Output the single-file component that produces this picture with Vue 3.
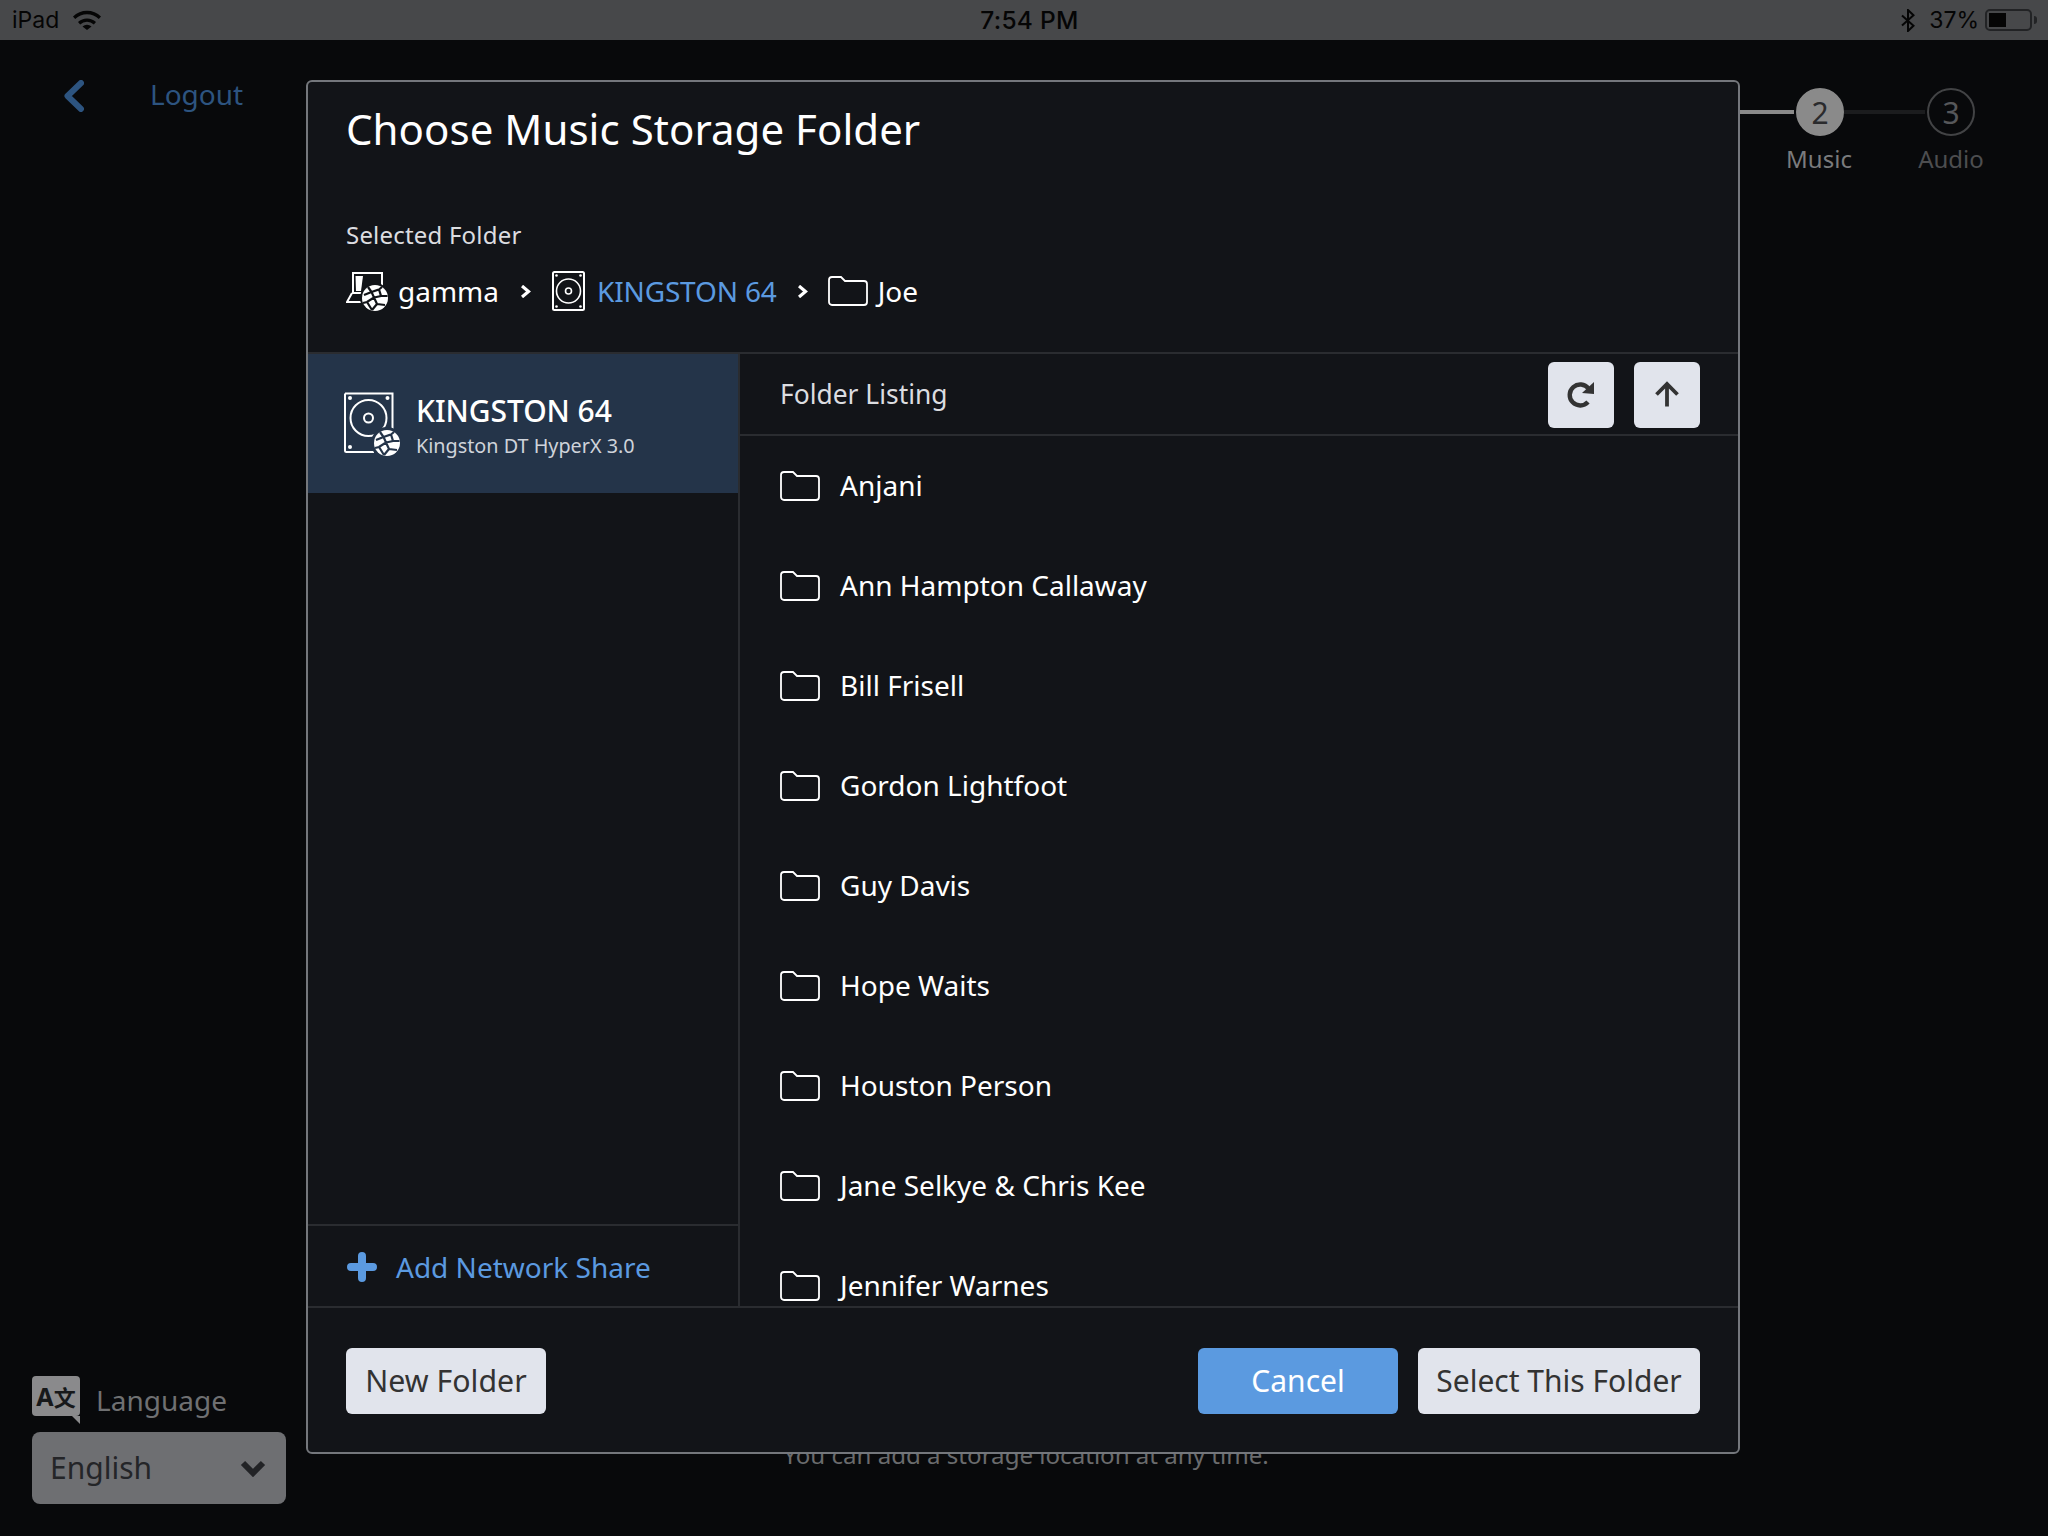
<script setup>
const folders = [
  'Anjani', 'Ann Hampton Callaway', 'Bill Frisell', 'Gordon Lightfoot', 'Guy Davis',
  'Hope Waits', 'Houston Person', 'Jane Selkye & Chris Kee', 'Jennifer Warnes'
]
const cracks = 'M-3.500-6-7-11M4-8.500 7-11M-3.500-6 4-8.500 6-2-1-0.500ZM-3.500-6-11-3M-1-0.500-8 4-12 5M-8 4-3 12M6-2 12.500-2M-1-0.500 2 6M2 6 10 7M2 6-3 12'
</script>

<template>
  <div class="page">
    <header class="status">
      <div class="status-left">
        <span>iPad</span>
        <svg class="wifi" viewBox="0 0 28 20">
          <path d="M9.500 16.400A7 7 0 0 1 18.500 16.400L14 20Z" />
          <path d="M5 12A13 13 0 0 1 23 12L20.800 14.400A10 10 0 0 0 7.200 14.400Z" />
          <path d="M0 6.500A20 20 0 0 1 28 6.500L25.800 9A17 17 0 0 0 2.200 9Z" />
        </svg>
      </div>
      <div class="status-time">7:54 PM</div>
      <div class="status-right">
        <svg class="bt" viewBox="0 0 14 23">
          <path d="M1 6.500 12.500 16.800 7 22V1l5.500 5.200L1 16.500" fill="none" stroke="#050505" stroke-width="2" />
        </svg>
        <span>37%</span>
        <div class="battery"><div class="battery-fill"></div></div>
        <div class="battery-nub"></div>
      </div>
    </header>

    <main class="main">
      <aside class="left">
        <div class="back-row">
          <svg class="back" viewBox="0 0 20 32">
            <path d="M17 3 3.500 16 17 29" fill="none" stroke="#2d5480" stroke-width="6" stroke-linecap="round" stroke-linejoin="round" />
          </svg>
          <span class="logout">Logout</span>
        </div>
        <div class="lang">
          <div class="lang-label">
            <div class="lang-icon"><b>A</b><b class="cjk">文</b></div>
            <span>Language</span>
          </div>
          <div class="lang-select">
            <span>English</span>
            <svg class="lang-chev" viewBox="0 0 26 17">
              <path d="M3 3 13 13 23 3" fill="none" stroke="#222326" stroke-width="6" />
            </svg>
          </div>
        </div>
      </aside>

      <section class="center">
        <p class="hint">You can add a storage location at any time.</p>
      </section>

      <aside class="steps">
        <div class="step-line done"></div>
        <div class="step">
          <div class="step-circle active">2</div>
          <div class="step-label music">Music</div>
        </div>
        <div class="step-line"></div>
        <div class="step">
          <div class="step-circle">3</div>
          <div class="step-label dim">Audio</div>
        </div>
      </aside>

      <div class="modal">
        <div class="modal-head">
          <h1 class="title">Choose Music Storage Folder</h1>
          <div class="selected-label">Selected Folder</div>
          <div class="crumbs">
            <svg class="ic-gamma" viewBox="0 0 42 40">
              <path d="M7 21V2h29v13" fill="none" stroke="#fff" stroke-width="2" />
              <path d="M9.500 5h7.500l-2 15H10Z" fill="#fff" />
              <path d="M6 22H20M6 22 1 31H18" fill="none" stroke="#fff" stroke-width="2" />
              <circle cx="29" cy="27" r="15" fill="#121418" />
              <circle cx="29" cy="27" r="13" fill="#fff" />
              <path :d="cracks" transform="translate(29 27)" fill="none" stroke="#121418" stroke-width="2.200" />
            </svg>
            <span class="crumb gamma">gamma</span>
            <svg class="crumb-sep" viewBox="0 0 10 13"><path d="M1 1 7.500 6.500 1 12" fill="none" stroke="#fff" stroke-width="3.200" /></svg>
            <svg class="ic-disk" viewBox="0 0 33 40">
              <rect x="1" y="1" width="31" height="38" rx="1.500" fill="none" stroke="#fff" stroke-width="2" />
              <circle cx="16.500" cy="20" r="12" fill="none" stroke="#fff" stroke-width="1.600" />
              <circle cx="16.500" cy="20" r="3" fill="none" stroke="#fff" stroke-width="1.600" />
              <circle cx="4.500" cy="4.500" r="1.300" fill="#fff" /><circle cx="28.500" cy="4.500" r="1.300" fill="#fff" />
              <circle cx="4.500" cy="35.500" r="1.300" fill="#fff" /><circle cx="28.500" cy="35.500" r="1.300" fill="#fff" />
            </svg>
            <span class="crumb link">KINGSTON 64</span>
            <svg class="crumb-sep second" viewBox="0 0 10 13"><path d="M1 1 7.500 6.500 1 12" fill="none" stroke="#fff" stroke-width="3.200" /></svg>
            <svg class="ic-folder" viewBox="0 0 40 30">
              <path d="M1 4a3 3 0 0 1 3-3h9l4 4h19a3 3 0 0 1 3 3v18a3 3 0 0 1-3 3H4a3 3 0 0 1-3-3Z" fill="none" stroke="#fff" stroke-width="1.800" />
            </svg>
            <span class="crumb joe">Joe</span>
          </div>
        </div>

        <div class="modal-body">
          <div class="side">
            <div class="drive">
              <svg class="ic-drive" viewBox="0 0 56 64">
                <path d="M1 1.500h47.500v36M30 60H2.500a1.500 1.500 0 0 1-1.500-1.500V1.500" fill="none" stroke="#fff" stroke-width="2" />
                <circle cx="24.500" cy="26" r="18" fill="none" stroke="#fff" stroke-width="2" />
                <circle cx="24.500" cy="26" r="4.500" fill="none" stroke="#fff" stroke-width="2" />
                <circle cx="6" cy="6" r="2" fill="#fff" /><circle cx="43.500" cy="6" r="2" fill="#fff" /><circle cx="6" cy="55" r="2" fill="#fff" />
                <circle cx="43" cy="51" r="16" fill="#243449" />
                <circle cx="43" cy="51" r="13" fill="#fff" />
                <path :d="cracks" transform="translate(43 51)" fill="none" stroke="#243449" stroke-width="2.200" />
              </svg>
              <div class="drive-text">
                <div class="drive-name">KINGSTON 64</div>
                <div class="drive-sub">Kingston DT HyperX 3.0</div>
              </div>
            </div>
            <div class="add-share">
              <svg class="ic-plus" viewBox="0 0 30 30">
                <path d="M15 4v22M4 15h22" stroke="#5b9ae0" stroke-width="8" stroke-linecap="round" />
              </svg>
              <span>Add Network Share</span>
            </div>
          </div>

          <div class="listing">
            <div class="listing-head">
              <span class="listing-title">Folder Listing</span>
              <div class="listing-tools">
                <button class="tool">
                  <svg class="ic-tool" viewBox="0 0 30 30">
                    <path d="M22.500 8.500A10.500 10.500 0 1 0 22 22" fill="none" stroke="#333" stroke-width="4.400" />
                    <path d="M28 2v12L16 13Z" fill="#333" />
                  </svg>
                </button>
                <button class="tool">
                  <svg class="ic-tool" viewBox="0 0 30 30">
                    <path d="M15 26.500V5M4.500 14.500 15 4l10.500 10.500" fill="none" stroke="#333" stroke-width="3.800" />
                  </svg>
                </button>
              </div>
            </div>
            <div class="rows">
              <div v-for="f in folders" :key="f" class="row">
                <svg class="ic-folder" viewBox="0 0 40 30">
                  <path d="M1 4a3 3 0 0 1 3-3h9l4 4h19a3 3 0 0 1 3 3v18a3 3 0 0 1-3 3H4a3 3 0 0 1-3-3Z" fill="none" stroke="#fff" stroke-width="1.800" />
                </svg>
                <span class="row-name">{{ f }}</span>
              </div>
            </div>
          </div>
        </div>

        <div class="modal-foot">
          <button class="btn new">New Folder</button>
          <div class="foot-right">
            <button class="btn primary">Cancel</button>
            <button class="btn select">Select This Folder</button>
          </div>
        </div>
      </div>
    </main>
  </div>
</template>

<style>
html, body { margin: 0; background: #08090b; }
</style>

<style scoped>
* { box-sizing: border-box; }
.page {
  width: 2048px;
  height: 1536px;
  display: flex;
  flex-direction: column;
  overflow: hidden;
  background: #08090b;
  font-family: "Noto Sans", sans-serif;
}
.status {
  height: 40px;
  flex: none;
  background: #47484a;
  color: #050505;
  display: grid;
  grid-template-columns: 1fr auto 1fr;
  align-items: center;
  padding: 0 11px 0 12px;
  font-family: Inter, "Liberation Sans", sans-serif;
  font-size: 23px;
}
.status-left { display: flex; align-items: center; gap: 14px; }
.wifi { width: 28px; height: 20px; fill: #050505; }
.status-time { font-weight: 500; font-size: 24.500px; letter-spacing: .3px; padding-left: 10px; }
.status-right { display: flex; align-items: center; justify-content: flex-end; }
.bt { width: 14px; height: 23px; margin-right: 14px; }
.battery {
  width: 47px;
  height: 22px;
  margin-left: 6px;
  border: 2px solid #222325;
  border-radius: 5px;
  padding: 2px;
}
.battery-fill { width: 17px; height: 100%; background: #050505; }
.battery-nub { width: 3px; height: 8px; margin-left: 2px; background: #222325; border-radius: 0 3px 3px 0; }

.main { flex: 1; position: relative; display: flex; }
.left {
  width: 306px;
  flex: none;
  display: flex;
  flex-direction: column;
  justify-content: space-between;
  padding: 38px 20px 32px 32px;
}
.back-row { display: flex; align-items: center; padding-left: 32px; }
.back { width: 20px; height: 32px; }
.logout { margin-left: 66px; padding-bottom: 4px; font-size: 28px; line-height: 32px; color: #2d5480; }
.lang-label { display: flex; align-items: center; gap: 16px; color: #6f7072; font-size: 28px; }
.lang-icon {
  position: relative;
  width: 48px;
  height: 40px;
  margin-bottom: 8px;
  background: #8a8a8c;
  border-radius: 4px;
  display: flex;
  align-items: center;
  justify-content: center;
  color: #17181a;
  font-size: 25px;
  line-height: 40px;
}
.lang-icon::after {
  content: "";
  position: absolute;
  right: 0;
  top: 40px;
  border-top: 8px solid #8a8a8c;
  border-left: 8px solid transparent;
}
.cjk { font-family: "Noto Sans CJK SC", sans-serif; font-size: 22px; }
.lang-select {
  margin-top: 8px;
  width: 254px;
  height: 72px;
  background: #6e6f72;
  border-radius: 8px;
  display: flex;
  align-items: center;
  justify-content: space-between;
  padding: 0 20px 2px 18px;
  color: #242528;
  font-size: 30px;
}
.lang-chev { width: 26px; height: 17px; margin-top: 2px; }

.center { flex: 1; margin-right: 302px; display: flex; align-items: flex-end; justify-content: center; }
.hint {
  margin: 0 0 61px;
  font-size: 24.100px;
  line-height: 40px;
  color: #6a6b6d;
  width: 100%;
  text-align: center;
}
.steps {
  position: absolute;
  top: 48px;
  left: 1740px;
  display: flex;
  align-items: flex-start;
}
.step { width: 48px; display: flex; flex-direction: column; align-items: center; margin-left: 2px; }
.step-line { width: 81px; height: 4px; margin-top: 22px; background: #1b1c1e; }
.step-line.done { width: 54px; background: #8a8a8a; }
.step-circle {
  width: 48px;
  height: 48px;
  border-radius: 50%;
  border: 2px solid #424345;
  color: #56575a;
  display: flex;
  align-items: center;
  justify-content: center;
  font-size: 30px;
}
.step-circle.active { background: #8a8a8a; border-color: #8a8a8a; color: #2a2b2d; }
.step-label { margin-top: 7px; font-size: 24px; line-height: 32px; color: #7a7b7d; white-space: nowrap; }
.step-label.music { padding-right: 2px; }
.step-label.dim { color: #4d4e50; }

.modal {
  position: absolute;
  left: 306px;
  top: 40px;
  width: 1434px;
  height: 1374px;
  background: #121418;
  border: 2px solid #74777c;
  border-radius: 6px;
  display: flex;
  flex-direction: column;
  color: #fff;
}
.modal-head { height: 270px; flex: none; padding: 0 38px; }
.title { margin: 0; padding-top: 19px; font-size: 42px; line-height: 56px; font-weight: 400; letter-spacing: .04px; }
.selected-label { margin-top: 62px; font-size: 24px; line-height: 32px; color: #dcdde0; letter-spacing: .2px; }
.crumbs { margin-top: 20px; display: flex; align-items: center; height: 40px; }
.crumb { font-size: 28px; line-height: 40px; }
.gamma { margin-left: 10px; }
.ic-gamma { width: 42px; height: 40px; }
.crumb-sep { width: 10px; height: 13px; margin: 0 21px 0 22px; }
.crumb-sep.second { margin: 0 20px 0 21px; }
.ic-disk { width: 33px; height: 40px; margin-right: 12px; }
.link { color: #5b9ae0; letter-spacing: -.15px; }
.ic-folder { width: 40px; height: 30px; flex: none; }
.joe { margin-left: 10px; }

.modal-body {
  flex: 1;
  min-height: 0;
  display: grid;
  grid-template-columns: 432px 1fr;
  border-top: 2px solid #2a2c30;
  border-bottom: 2px solid #2a2c30;
}
.side { display: flex; flex-direction: column; justify-content: space-between; border-right: 2px solid #2a2c30; }
.drive {
  height: 139px;
  background: #243449;
  display: flex;
  align-items: center;
  padding-left: 36px;
  gap: 16px;
}
.ic-drive { width: 56px; height: 64px; }
.drive-text { padding-top: 2px; }
.drive-name { font-size: 30px; line-height: 43px; font-weight: 500; letter-spacing: -.05px; }
.drive-sub { font-size: 19.800px; line-height: 28px; color: #cfd3da; }
.add-share {
  height: 82px;
  padding-top: 2px;
  border-top: 2px solid #2a2c30;
  display: flex;
  align-items: center;
  padding-left: 39px;
  gap: 19px;
  color: #5b9ae0;
  font-size: 28px;
}
.ic-plus { width: 30px; height: 30px; }
.listing { display: flex; flex-direction: column; min-height: 0; overflow: hidden; }
.listing-head {
  height: 82px;
  flex: none;
  border-bottom: 2px solid #2a2c30;
  display: flex;
  align-items: center;
  justify-content: space-between;
  padding: 2px 38px 0 40px;
}
.listing-title { font-size: 26.400px; color: #dcdde0; margin-top: -2px; }
.listing-tools { display: flex; gap: 20px; }
.tool {
  width: 66px;
  height: 66px;
  padding: 0;
  border: 0;
  border-radius: 6px;
  background: #e1e4ec;
  display: flex;
  align-items: center;
  justify-content: center;
}
.ic-tool { width: 30px; height: 30px; }
.rows { flex: 1; min-height: 0; overflow: hidden; padding: 0 40px; }
.row { height: 100px; display: flex; align-items: center; gap: 20px; font-size: 28px; color: #fff; }
.row-name { padding-bottom: 2px; }

.modal-foot {
  flex: 0 0 144px;
  display: flex;
  align-items: center;
  justify-content: space-between;
  padding: 2px 38px 0;
}
.foot-right { display: flex; gap: 20px; }
.btn {
  height: 66px;
  padding: 0 0 2px;
  border: 0;
  border-radius: 6px;
  background: #e1e4ec;
  color: #333;
  font-family: inherit;
  font-size: 30px;
  width: 200px;
}
.btn.new { font-size: 30.300px; }
.btn.primary { background: #5b9ae0; color: #fff; }
.btn.select { width: 282px; }
</style>
